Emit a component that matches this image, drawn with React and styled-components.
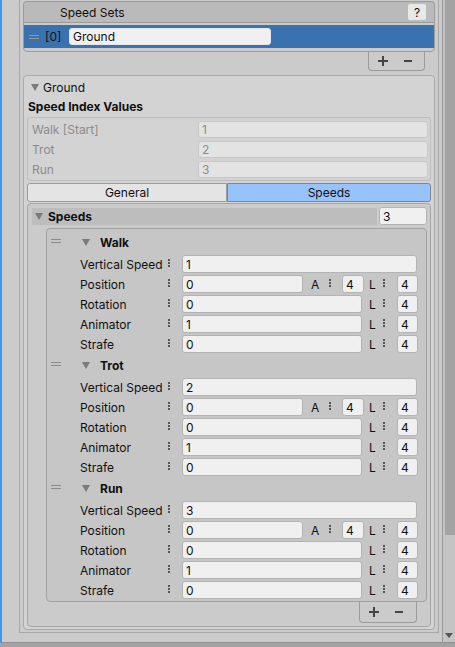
import React from "react";
import styled, { createGlobalStyle } from "styled-components";

const GlobalStyle = createGlobalStyle`
  * { box-sizing: border-box; }
  body {
    margin: 0;
    background: #a3a3a3;
    font-family: Inter, "Noto Sans", sans-serif;
    font-size: 12px;
    color: #101010;
  }
`;

const Screen = styled.div`
  width: 455px;
  height: 647px;
  display: flex;
  flex-direction: column;
`;
const Main = styled.div`
  display: flex;
  height: 643px;
`;
const Frame = styled.div`
  width: 443px;
  height: 643px;
  background: #cbcbcb;
  border-left: 2px solid #3f99e8;
  border-right: 1px solid #9a9a9a;
  border-bottom: 1px solid #8f8f8f;
  padding: 0 3px 0 17px;
`;
const Inspector = styled.div`
  height: 633px;
  border: 1px solid #a8a8a8;
  border-top: none;
  padding: 1px 3px 2px;
  display: flex;
  flex-direction: column;
`;
const Scrollbar = styled.div`
  width: 12px;
  height: 643px;
  display: flex;
  flex-direction: column;
  background: #c4c4c4;
  border-bottom: 1px solid #8f8f8f;
`;
const Thumb = styled.div`
  height: 535px;
  margin-left: 2px;
  background: #a3a3a3;
`;
const ScrollArrow = styled.div`
  margin-top: auto;
  height: 14px;
  display: flex;
  align-items: center;
  justify-content: center;
  &::after {
    content: "";
    border-left: 4px solid transparent;
    border-right: 4px solid transparent;
    border-top: 5px solid #555;
  }
`;
const BottomStrip = styled.div`
  height: 4px;
  background: #a3a3a3;
`;

/* shared bits */
const Triangle = styled.span`
  width: 0;
  height: 0;
  flex-shrink: 0;
  border-left: 4px solid transparent;
  border-right: 4px solid transparent;
  border-top: 7px solid ${(p) => p.$color || "#7a7a7a"};
`;
const Handle = styled.span`
  width: 10px;
  height: 4px;
  flex-shrink: 0;
  border-top: 1px solid ${(p) => p.$color};
  border-bottom: 1px solid ${(p) => p.$color};
  margin-top: ${(p) => p.$lift || 0}px;
`;
const Field = styled.input`
  height: ${(p) => p.$h || 18}px;
  width: ${(p) => (p.$w ? `${p.$w}px` : "auto")};
  flex: ${(p) => (p.$w ? "0 0 auto" : "1 1 0")};
  min-width: 0;
  margin: 0;
  padding: 0 0 0 3px;
  font: inherit;
  color: #101010;
  background: #f0f0f0;
  border: 1px solid #b4b4b4;
  border-radius: 3px;
  outline: none;
`;
const Bold = styled.span`
  font-weight: 700;
`;

const PlusIcon = () => (
  <svg width="10" height="10" viewBox="0 0 10 10">
    <path d="M5 0v10M0 5h10" stroke="#444" strokeWidth="2" />
  </svg>
);
const MinusIcon = () => (
  <svg width="8" height="10" viewBox="0 0 8 10">
    <path d="M0 5h8" stroke="#444" strokeWidth="2" />
  </svg>
);

const ListFooter = styled.div`
  align-self: flex-end;
  margin-right: 10px;
  width: ${(p) => p.$w}px;
  height: ${(p) => p.$h}px;
  border: 1px solid #9c9c9c;
  border-top: none;
  border-radius: 0 0 4px 4px;
  display: flex;
  align-items: center;
  gap: 16px;
  padding-left: 9px;
`;

/* Speed Sets list */
const ListHeader = styled.div`
  height: 21px;
  display: flex;
  align-items: center;
  justify-content: space-between;
  background: #bababa;
  border: 1px solid #9c9c9c;
  border-bottom: none;
  border-radius: 4px 4px 0 0;
  padding: 0 8px 0 36px;
`;
const HelpButton = styled.div`
  width: 18px;
  height: 16px;
  background: #e8e8e8;
  border-radius: 2px;
  display: flex;
  align-items: center;
  justify-content: center;
  font-size: 12px;
`;
const ListBody = styled.div`
  border: 1px solid #9c9c9c;
  border-radius: 0 0 4px 4px;
  padding: 2px 0 3px;
`;
const SelectedRow = styled.div`
  height: 23px;
  background: #3a72b0;
  display: flex;
  align-items: center;
  padding-left: 5px;
`;
const IndexText = styled.span`
  width: 16px;
  margin-left: 6px;
  color: #111;
`;
const NameField = styled(Field)`
  margin-left: 8px;
  border-color: #e4e8ee;
`;

/* Ground foldout */
const GroundBox = styled.div`
  margin-top: 4px;
  border: 1px solid #a9a9a9;
  border-radius: 4px;
  background: #d3d3d3;
  padding: 1px 3px 2px;
  display: flex;
  flex-direction: column;
`;
const FoldoutRow = styled.div`
  height: 20px;
  display: flex;
  align-items: center;
  padding-left: 4px;
  gap: 4px;
`;
const SectionTitle = styled.div`
  height: 20px;
  line-height: 20px;
  padding-left: 1px;
  font-weight: 700;
`;
const IndexBox = styled.div`
  border: 1px solid #bdbdbd;
  border-radius: 3px;
  padding: 3px 2px 2px 4px;
  display: grid;
  row-gap: 3px;
`;
const IndexRow = styled.div`
  display: grid;
  grid-template-columns: 166px 1fr;
  align-items: center;
  height: 17px;
  color: #8c8c8c;
`;
const DisabledField = styled.div`
  height: 17px;
  line-height: 15px;
  padding-left: 3px;
  background: #e3e3e3;
  border: 1px solid #c8c8c8;
  border-radius: 3px;
`;

const Tabs = styled.div`
  margin-top: 2px;
  height: 19px;
  display: grid;
  grid-template-columns: 200px 1fr;
`;
const Tab = styled.div`
  display: flex;
  align-items: center;
  justify-content: center;
  background: ${(p) => (p.$active ? "#96c3fb" : "#e4e4e4")};
  border: 1px solid ${(p) => (p.$active ? "#7a8799" : "#9c9c9c")};
  border-radius: ${(p) => (p.$active ? "0 3px 3px 0" : "3px 0 0 3px")};
`;

/* Speeds array */
const SpeedsBox = styled.div`
  margin-top: 1px;
  border: 1px solid #a6a6a6;
  border-radius: 4px;
  background: #cbcbcb;
  padding: 3px 3px 3px 4px;
  display: flex;
  flex-direction: column;
`;
const SpeedsHeader = styled.div`
  display: flex;
  height: 18px;
  gap: 2px;
`;
const HeaderBar = styled.div`
  flex: 1;
  margin-top: 1px;
  height: 17px;
  background: #bdbdbd;
  display: flex;
  align-items: center;
  padding-left: 3px;
  gap: 5px;
`;
const InnerList = styled.div`
  margin: 3px 0 0 14px;
  border: 1px solid #a2a2a2;
  border-radius: 4px;
  background: #c6c6c6;
  padding: 2px 0 1px;
`;
const GroupHeader = styled.div`
  height: 23px;
  display: flex;
  align-items: center;
  padding-left: 4px;
`;
const GroupArrow = styled(Triangle)`
  margin-left: 21px;
`;
const GroupName = styled(Bold)`
  margin-left: 10px;
`;
const PropRow = styled.div`
  height: 20px;
  display: flex;
  align-items: center;
  padding: 0 8px 0 33px;
`;
const PropLabel = styled.span`
  width: ${(p) => p.$w || 83}px;
  flex-shrink: 0;
  white-space: nowrap;
`;
const DotsBox = styled.span`
  width: ${(p) => p.$w}px;
  flex-shrink: 0;
  display: flex;
  justify-content: center;
  &::before {
    content: "";
    width: 2px;
    height: 8px;
    margin-top: -3px;
    background: linear-gradient(
      #555 0 2px,
      transparent 2px 3px,
      #555 3px 5px,
      transparent 5px 6px,
      #555 6px 8px
    );
  }
`;
const MainField = styled(Field)`
  margin-left: 7px;
  margin-right: ${(p) => p.$mr || 0}px;
`;
const Suffix = styled.div`
  display: flex;
  align-items: center;
  margin-left: ${(p) => p.$lead}px;
`;

const SuffixField = ({ letter, lead, letterW, gap, fieldW }) => (
  <Suffix $lead={lead}>
    <PropLabel $w={letterW}>{letter}</PropLabel>
    <DotsBox $w={10} />
    <Field style={{ marginLeft: gap }} $w={fieldW} readOnly value="4" />
  </Suffix>
);

const speeds = [
  { name: "Walk", vertical: 1, position: 0, rotation: 0, animator: 1, strafe: 0 },
  { name: "Trot", vertical: 2, position: 0, rotation: 0, animator: 1, strafe: 0 },
  { name: "Run", vertical: 3, position: 0, rotation: 0, animator: 1, strafe: 0 },
];

const indexValues = [
  ["Walk [Start]", 1],
  ["Trot", 2],
  ["Run", 3],
];

const SpeedGroup = ({ speed }) => (
  <div>
    <GroupHeader>
      <Handle $color="#8b8b8b" $lift={-3} />
      <GroupArrow />
      <GroupName>{speed.name}</GroupName>
    </GroupHeader>
    <PropRow>
      <PropLabel>Vertical Speed</PropLabel>
      <DotsBox $w={12} />
      <MainField $mr={1} readOnly value={speed.vertical} />
    </PropRow>
    <PropRow>
      <PropLabel>Position</PropLabel>
      <DotsBox $w={12} />
      <MainField readOnly value={speed.position} />
      <SuffixField letter="A" lead={8} letterW={14} gap={7} fieldW={22} />
      <SuffixField letter="L" lead={5} letterW={10} gap={8} fieldW={21} />
    </PropRow>
    {[
      ["Rotation", speed.rotation],
      ["Animator", speed.animator],
      ["Strafe", speed.strafe],
    ].map(([label, value]) => (
      <PropRow key={label}>
        <PropLabel>{label}</PropLabel>
        <DotsBox $w={12} />
        <MainField readOnly value={value} />
        <SuffixField letter="L" lead={7} letterW={10} gap={8} fieldW={21} />
      </PropRow>
    ))}
  </div>
);

const App = () => {
  return (
    <Screen>
      <GlobalStyle />
      <Main>
        <Frame>
          <Inspector>
            <ListHeader>
              <span>Speed Sets</span>
              <HelpButton>?</HelpButton>
            </ListHeader>
            <ListBody>
              <SelectedRow>
                <Handle $color="#a3957c" />
                <IndexText>[0]</IndexText>
                <NameField $h={17} $w={202} readOnly value="Ground" />
              </SelectedRow>
            </ListBody>
            <ListFooter $w={57} $h={19}>
              <PlusIcon />
              <MinusIcon />
            </ListFooter>

            <GroundBox>
              <FoldoutRow>
                <Triangle />
                <span>Ground</span>
              </FoldoutRow>
              <SectionTitle>Speed Index Values</SectionTitle>
              <IndexBox>
                {indexValues.map(([label, value]) => (
                  <IndexRow key={label}>
                    <span>{label}</span>
                    <DisabledField>{value}</DisabledField>
                  </IndexRow>
                ))}
              </IndexBox>
              <Tabs>
                <Tab>General</Tab>
                <Tab $active>Speeds</Tab>
              </Tabs>

              <SpeedsBox>
                <SpeedsHeader>
                  <HeaderBar>
                    <Triangle />
                    <Bold>Speeds</Bold>
                  </HeaderBar>
                  <Field $w={48} readOnly value="3" />
                </SpeedsHeader>
                <InnerList>
                  {speeds.map((s) => (
                    <SpeedGroup key={s.name} speed={s} />
                  ))}
                </InnerList>
                <ListFooter $w={58} $h={21}>
                  <PlusIcon />
                  <MinusIcon />
                </ListFooter>
              </SpeedsBox>
            </GroundBox>
          </Inspector>
        </Frame>
        <Scrollbar>
          <Thumb />
          <ScrollArrow />
        </Scrollbar>
      </Main>
      <BottomStrip />
    </Screen>
  );
};

export default App;
